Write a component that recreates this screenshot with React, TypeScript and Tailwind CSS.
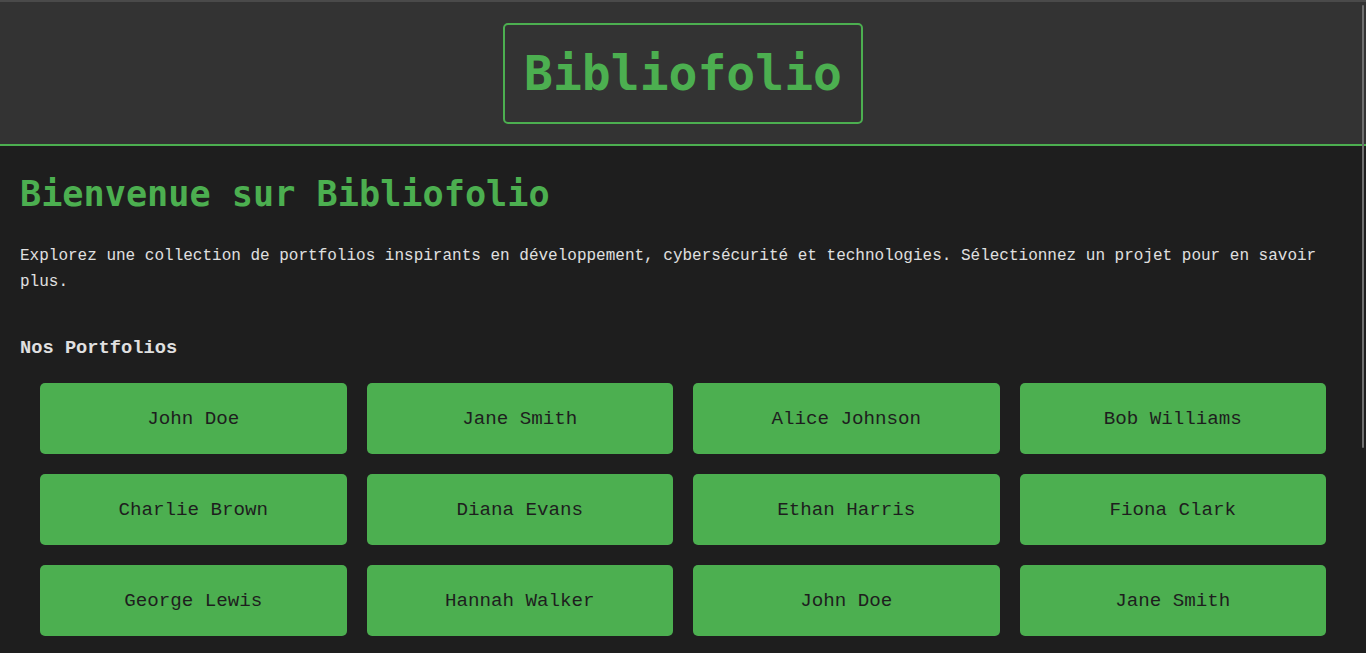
const portfolios = [
  "John Doe",
  "Jane Smith",
  "Alice Johnson",
  "Bob Williams",
  "Charlie Brown",
  "Diana Evans",
  "Ethan Harris",
  "Fiona Clark",
  "George Lewis",
  "Hannah Walker",
  "John Doe",
  "Jane Smith",
];

export default function App() {
  return (
    <div className="relative min-h-screen bg-[#1e1e1e] text-[#e0e0e0] font-['Liberation_Mono',monospace]">
      <header className="flex justify-center border-t-2 border-b-2 border-t-[#4a4a4a] border-b-[#4caf50] bg-[#333333] pt-[21px] pb-[20px]">
        <h1 className="rounded-[5px] border-2 border-[#4caf50] px-[19px] py-[20px] font-['DejaVu_Sans_Mono',monospace] text-[48px] font-bold leading-[57px] text-[#4caf50]">
          Bibliofolio
        </h1>
      </header>

      <main className="px-5 pt-5 pb-5">
        <h2 className="mt-[7px] font-['DejaVu_Sans_Mono',monospace] text-[35.2px] font-bold leading-[41px] text-[#4caf50]">
          Bienvenue sur Bibliofolio
        </h2>
        <p className="mt-[30px] text-[16px] leading-[25.6px]">
          Explorez une collection de portfolios inspirants en développement, cybersécurité et
          technologies. Sélectionnez un projet pour en savoir plus.
        </p>

        <h3 className="mt-[43px] text-[18.72px] font-bold leading-[21px]">Nos Portfolios</h3>

        <div className="mt-[24px] grid grid-cols-4 gap-5 px-5">
          {portfolios.map((name, i) => (
            <button
              key={i}
              className="rounded-[5px] bg-[#4caf50] pt-[26px] pb-[24px] text-center text-[19.2px] leading-[21px] text-[#1e1e1e]"
            >
              {name}
            </button>
          ))}
        </div>
      </main>

      <div className="absolute right-[2px] top-[5px] h-[443px] w-[2px] rounded-full bg-[#6f6f6f]" />
    </div>
  );
}
